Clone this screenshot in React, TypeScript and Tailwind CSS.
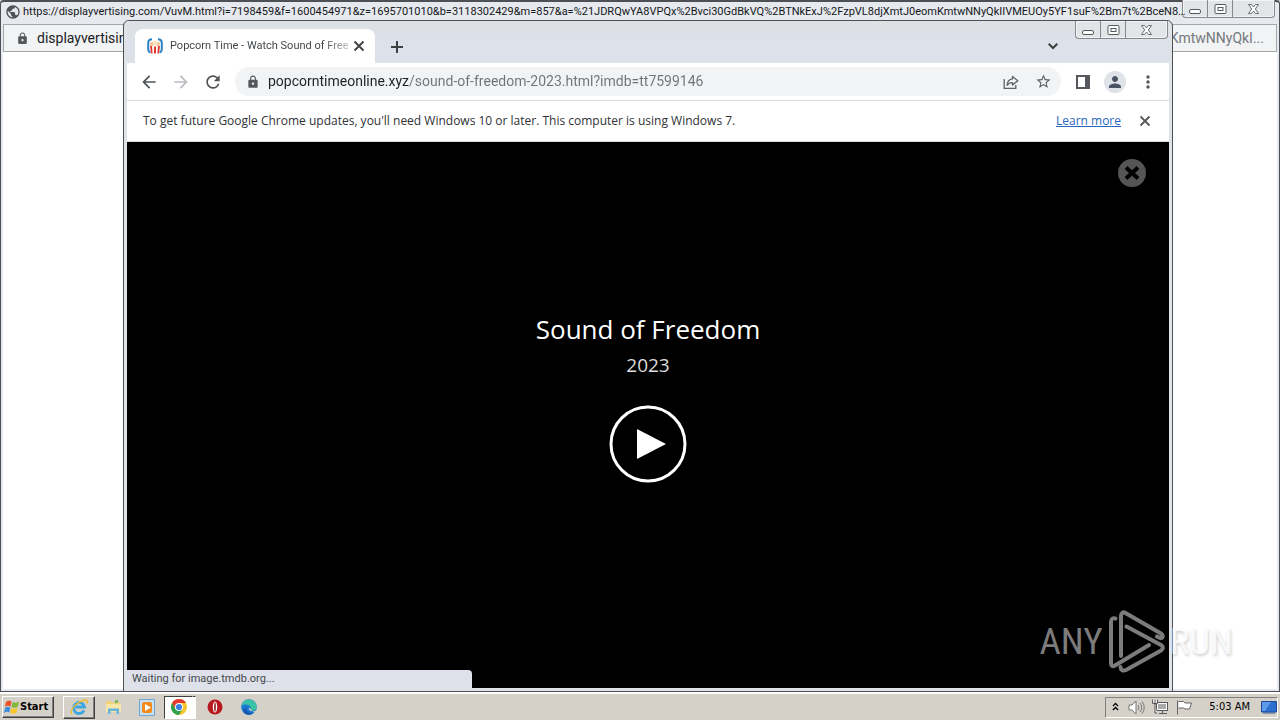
import type { ReactNode } from "react";
import {
  MdArrowBack,
  MdArrowForward,
  MdLock,
  MdMoreVert,
  MdPerson,
  MdPublic,
  MdRefresh,
  MdStarBorder,
} from "react-icons/md";

function CaptionButtons() {
  return (
    <div className="flex h-[18px] shrink-0 rounded-b border border-t-0 border-[#85888c] bg-[#e2e5e8] shadow-[inset_0_0_0_1px_#f2f4f6]">
      <button aria-label="Minimize" className="flex w-[24px] items-center justify-center">
        <svg width="14" height="12" viewBox="0 0 14 12" fill="#fff" stroke="#55585c">
          <rect x="1.5" y="6.5" width="11" height="4" rx="1.5" />
        </svg>
      </button>
      <button aria-label="Maximize" className="flex w-[26px] items-center justify-center border-x border-[#85888c]">
        <svg width="13" height="12" viewBox="0 0 13 12" fill="#fff" stroke="#55585c">
          <rect x="1" y="1.5" width="11" height="9" rx="1" />
          <rect x="4" y="4.5" width="5" height="3" />
        </svg>
      </button>
      <button aria-label="Close" className="flex w-[41px] items-center justify-center">
        <svg width="13" height="12" viewBox="0 0 13 12" fill="#fff" stroke="#6a6d71">
          <path d="M1.5 1.5h3l2 2.5 2-2.5h3L8.3 6l3.2 4.5h-3l-2-2.5-2 2.5h-3L4.7 6z" />
        </svg>
      </button>
    </div>
  );
}

function CrossIcon({ look }: { look: string }) {
  return (
    <svg className={look} viewBox="0 0 12 12" fill="none" stroke="currentColor" strokeWidth="1.8">
      <path d="m1.500 1.500 9 9M10.500 1.500l-9 9" />
    </svg>
  );
}

function BackWindow() {
  return (
    <section
      aria-label="displayvertising.com"
      className="absolute inset-0 flex flex-col rounded-t-sm border border-t-2 border-[#4d5055] bg-[#e6e9ed] px-[2px] pb-[2px]"
    >
      <header className="flex h-[22px] items-start justify-between">
        <div className="z-10 flex h-5 min-w-0 items-center gap-[2px] pl-[2px]">
          <MdPublic className="size-4 shrink-0 text-[#4f5358]" />
          <h2 className="whitespace-nowrap font-['Roboto','Noto_Sans',sans-serif] text-[11px] leading-5 text-[#15181c]">
            https://displayvertising.com/VuvM.html?i=7198459&amp;f=1600454971&amp;z=1695701010&amp;b=3118302429&amp;m=857&amp;a=%21JDRQwYA8VPQx%2Bvci30GdBkVQ%2BTNkExJ%2FzpVL8djXmtJ0eomKmtwNNyQkIIVMEUOy5YF1suF%2Bm7t%2BceN8…
          </h2>
        </div>
        <div className="-mt-[2px] mr-[2px]">
          <CaptionButtons />
        </div>
      </header>
      <div className="flex h-[28px] shrink-0 items-center border border-[#a4a8ad] bg-[#f1f3f4] pl-3 pr-3">
        <MdLock className="mr-2 size-[13px] shrink-0 text-[#55585d]" />
        <span className="flex-1 font-['Roboto','Noto_Sans',sans-serif] text-[14px] text-[#202124]">displayvertising</span>
        <span className="font-['Roboto','Noto_Sans',sans-serif] text-[14px] text-[#75797e]">KmtwNNyQkI...</span>
      </div>
      <div className="flex-1 bg-white" />
    </section>
  );
}

function PopcornIcon() {
  return (
    <svg className="size-4 shrink-0" viewBox="0 0 16 16">
      <path d="M5 1.200C2 1.200 1.200 2.500 1.200 5v6c0 2 .8 3 2.300 3.500M11 1.200c3 0 3.800 1.300 3.800 3.800v6c0 2-.8 3-2.300 3.500" fill="none" stroke="#2b83c6" strokeWidth="2" />
      <circle cx="5" cy="6" r="2.200" fill="#f7c9a0" />
      <circle cx="11" cy="6" r="2.200" fill="#f7c9a0" />
      <circle cx="8" cy="5" r="2.400" fill="#fbe3c4" />
      <path d="M3 8h10l-1 7.500H4z" fill="#fff" />
      <path d="M3 8h2l.6 7.500H4zM7 8.500h2v7H7zM11 8h2l-1 7.500h-1.600z" fill="#e2382d" />
    </svg>
  );
}

function TabStrip() {
  return (
    <div className="flex h-[42px] items-end justify-between bg-linear-to-b from-[#dde1e3] to-[#dde1e9] to-40% pl-2">
      <div className="flex items-end">
        <div className="flex h-[34px] w-[240px] items-center justify-between rounded-t-lg bg-white pl-3 pr-[10px]">
          <div className="flex items-center gap-[7px]">
            <PopcornIcon />
            <span className="whitespace-nowrap bg-linear-to-r from-[#3c4043] from-85% to-[#3c4043]/30 bg-clip-text font-['Roboto','Noto_Sans',sans-serif] text-[11px] text-transparent">
              Popcorn Time - Watch Sound of Free
            </span>
          </div>
          <button aria-label="Close tab" className="text-[#3c4043]">
            <CrossIcon look="size-3" />
          </button>
        </div>
        <button aria-label="New tab" className="mb-[10px] ml-4">
          <svg width="12" height="12" viewBox="0 0 12 12" stroke="#3c4043" strokeWidth="2">
            <path d="M6 0v12M0 6h12" />
          </svg>
        </button>
      </div>
      <div className="mr-px flex h-[42px] items-start">
        <button aria-label="Search tabs" className="mr-[17px] mt-[22px]">
          <svg width="10" height="7" viewBox="0 0 10 7" fill="none" stroke="#3c4043" strokeWidth="2">
            <path d="m.7.700 4.300 4.300L9.300.700" />
          </svg>
        </button>
        <CaptionButtons />
      </div>
    </div>
  );
}

function ShareIcon() {
  return (
    <svg className="size-4" viewBox="0 0 16 16" fill="none" stroke="#5f6368" strokeWidth="1.300">
      <path d="M1.200 5v9.300h11.600V11" />
      <path d="M9.500 2.500 14.800 6.800 9.500 11V8.700C7 8.700 5.300 9.500 4 11.300 4.300 7.800 6 5.200 9.500 4.800z" strokeLinejoin="round" />
    </svg>
  );
}

function Toolbar() {
  return (
    <div className="flex h-[38px] items-center border-b border-[#dadce0] bg-white pl-3 pr-[11px]">
      <div className="flex gap-3">
        <button aria-label="Back"><MdArrowBack className="size-5 text-[#4f5358]" /></button>
        <button aria-label="Forward"><MdArrowForward className="size-5 text-[#b9bcc0]" /></button>
        <button aria-label="Reload"><MdRefresh className="size-5 text-[#4f5358]" /></button>
      </div>
      <div className="ml-3 flex h-[29px] flex-1 items-center rounded-full bg-[#f1f3f5] pl-[11px] pr-[9px]">
        <MdLock className="mr-2 size-[14px] shrink-0 text-[#55585d]" />
        <input
          aria-label="Address and search bar"
          defaultValue="popcorntimeonline.xyz/sound-of-freedom-2023.html?imdb=tt7599146"
          className="min-w-0 flex-1 bg-linear-to-r from-[#202124] from-[141px] to-[#6f7378] to-[141px] bg-clip-text font-['Roboto','Noto_Sans',sans-serif] text-[14px] text-transparent outline-none"
        />
        <div className="flex gap-4">
          <button aria-label="Share this page"><ShareIcon /></button>
          <button aria-label="Bookmark this tab"><MdStarBorder className="size-[17px] text-[#5f6368]" /></button>
        </div>
      </div>
      <button aria-label="Side panel" className="ml-[14px]">
        <svg width="16" height="16" viewBox="0 0 16 16">
          <path d="M1 1h14v14H1zM3 3v10h7V3z" fill="#55585d" fillRule="evenodd" />
        </svg>
      </button>
      <button aria-label="Profile" className="ml-[13px] flex size-[22px] items-center justify-center rounded-full bg-[#dfe2e7]">
        <MdPerson className="size-[18px] text-[#4a5365]" />
      </button>
      <button aria-label="Menu" className="ml-3"><MdMoreVert className="size-5 text-[#55585d]" /></button>
    </div>
  );
}

function InfoBar() {
  return (
    <div className="flex h-[41px] items-center border-b border-[#dadce0] bg-white pl-4 pr-[18px] font-['Open_Sans','Noto_Sans',sans-serif] text-[12px] text-[#303236]">
      <p className="flex-1">To get future Google Chrome updates, you'll need Windows 10 or later. This computer is using Windows 7.</p>
      <a href="#learn-more" className="text-[#2a68bd] underline">Learn more</a>
      <button aria-label="Dismiss" className="ml-[18px] text-[#55585d]"><CrossIcon look="size-3" /></button>
    </div>
  );
}

function Player() {
  return (
    <main className="relative flex flex-1 flex-col items-center bg-black pt-[169px] font-['Open_Sans','Noto_Sans',sans-serif] text-white">
      <h1 className="text-[26px] leading-9">Sound of Freedom</h1>
      <p className="mt-1 text-[19px] leading-7 text-[#dcdcdc]">2023</p>
      <button aria-label="Play" className="mt-[26px]">
        <svg width="78" height="78" viewBox="0 0 78 78">
          <circle cx="39" cy="39" r="37" fill="none" stroke="#fff" strokeWidth="3" />
          <path d="M28 24v30l29-15z" fill="#fff" />
        </svg>
      </button>
      <button aria-label="Close player" className="absolute right-[23px] top-[17px]">
        <svg width="28" height="28" viewBox="0 0 28 28">
          <circle cx="14" cy="14" r="14" fill="#555" />
          <path d="m8 8.500 12 11M20 8.500l-12 11" stroke="#000" strokeWidth="4" />
        </svg>
      </button>
      <div role="status" className="absolute bottom-0 left-0 h-[18px] w-[345px] rounded-tr bg-[#dee1e9] pl-[5px] font-['Roboto','Noto_Sans',sans-serif] text-[11px] leading-[18px] text-[#45484d]">
        Waiting for image.tmdb.org...
      </div>
    </main>
  );
}

function FrontWindow() {
  return (
    <section
      aria-label="Popcorn Time"
      className="absolute bottom-0 left-[123px] right-[107px] top-5 flex flex-col rounded-t-md border border-[#4d5055] bg-[#dfe2e7] px-[3px] pb-[3px]"
    >
      <TabStrip />
      <Toolbar />
      <InfoBar />
      <Player />
    </section>
  );
}

function Watermark() {
  return (
    <div className="pointer-events-none absolute bottom-[19px] right-[47px] z-20 flex items-center gap-[5px] font-['Roboto_Condensed','Liberation_Sans',sans-serif] text-[37px] leading-none">
      <span className="text-[#7c7c7c]">ANY</span>
      <svg width="57" height="64" viewBox="0 0 57 64" fill="none" stroke="#7c7c7c" strokeWidth="4" strokeLinejoin="round" strokeLinecap="round">
        <path d="M7.500 9.500C5 8.500 3 10 3 13v41c0 3 1.500 4 4 2.500L41 36" />
        <path d="M13 47V7c0-3 2-4.500 4.500-3L53 24.500c3 2 1.500 5.500-1 4.500l-3-1.500" />
        <path d="M18.500 17.500 53 36c2.500 1.500 2.500 4 0 5.500L18 61c-3 1.500-5.500 0-5.500-3" />
      </svg>
      <span className="text-white/80 [text-shadow:1px_2px_3px_#00000030]">RUN</span>
    </div>
  );
}

function TaskButton({ label, look, children }: { label: string; look: string; children: ReactNode }) {
  return (
    <button aria-label={label} className={`flex h-[23px] items-center justify-center ${look}`}>
      {children}
    </button>
  );
}

function Taskbar() {
  const raised = "border border-white border-b-[#404040] border-r-[#404040] shadow-[inset_-1px_-1px_0_#808080]";
  return (
    <nav
      aria-label="Taskbar"
      className="flex h-[28px] shrink-0 items-center justify-between border-t-2 border-white bg-[#d5d0c8] pl-[2px] pr-[2px] font-['DejaVu_Sans_Condensed','DejaVu_Sans',sans-serif] text-[11px] text-black"
    >
      <div className="flex items-center">
        <button className={`flex h-[22px] w-[52px] items-center pl-px font-bold ${raised}`}>
          <svg className="size-4 shrink-0" viewBox="0 0 16 16">
            <path d="M2 3c2-1.500 4-1.500 5.500-.5L6.500 7.500C5 6.500 3 6.500 1 8z" fill="#e8522a" />
            <path d="M8.500 3c2 1 4 1 6.500-.5L14 7.500c-2.500 1.500-4.500 1.500-6.500.5z" fill="#83b83a" />
            <path d="M1 9c2-1.500 4-1.500 5.300-.5l-1 5C4 12.500 2 12.500 0 14z" fill="#3b8fdc" />
            <path d="M7.200 9c2 1 4 1 6.500-.5l-1 5c-2.500 1.500-4.500 1.500-6.500.5z" fill="#f7c62d" />
          </svg>
          Start
        </button>
        <div className="ml-[9px] flex items-center">
          <TaskButton label="Internet Explorer" look={`w-8 ${raised}`}>
            <svg width="18" height="18" viewBox="0 0 18 18" fill="none">
              <path d="M14 12.500A5.500 5.500 0 1 1 14.500 9H4" stroke="#3da5e0" strokeWidth="2.800" />
              <path d="M2 16C-1 13 6 4 15 2c3-.5 2.500 2 1.500 3.500" stroke="#efbb2c" strokeWidth="1.400" />
            </svg>
          </TaskButton>
          <TaskButton label="Windows Explorer" look="w-[34px] ml-px">
            <svg width="17" height="16" viewBox="0 0 17 16">
              <path d="M1 2h5l1 1.500h8V13H1z" fill="#efd277" />
              <path d="M1 5h15v8H1z" fill="#f8e7a6" />
              <path d="M3 15V9.500h11V15h-2.500v-3h-6v3z" fill="#65b5dc" />
              <path d="M10 1h3v3h-3z" fill="#79b85b" />
            </svg>
          </TaskButton>
          <TaskButton label="Media Player" look="w-[34px]">
            <svg width="16" height="17" viewBox="0 0 16 17">
              <path d="M.5.500h15v16H.5z" fill="#c6e0f2" stroke="#6fa6d2" />
              <rect x="3" y="3" width="10" height="11" rx="2" fill="#f28a1c" />
              <path d="m6 5 6 3.500-6 3.500z" fill="#fff" />
            </svg>
          </TaskButton>
          <TaskButton label="Google Chrome" look="w-[29px] border border-[#404040] border-b-white border-r-white bg-white">
            <svg width="16" height="16" viewBox="0 0 16 16">
              <circle cx="8" cy="8" r="8" fill="#f9c52b" />
              <path d="M1.070 4A8 8 0 0 1 14.930 4H8L4.500 10z" fill="#e23a2e" />
              <path d="M1.070 4A8 8 0 0 0 8 16l3.500-6-3.500 2L4.500 10z" fill="#2fa14c" />
              <circle cx="8" cy="8" r="4" fill="#fff" />
              <circle cx="8" cy="8" r="3.100" fill="#3c7fe8" />
            </svg>
          </TaskButton>
          <div className="h-[23px] w-[3px] border-r border-t border-r-white border-t-[#404040] bg-white" />
          <TaskButton label="Opera" look="ml-[2px] w-[34px]">
            <svg width="16" height="16" viewBox="0 0 16 16">
              <circle cx="8" cy="8" r="7.500" fill="#b8181c" />
              <ellipse cx="8" cy="8" rx="2.200" ry="5.500" fill="#fff" />
              <ellipse cx="8" cy="8" rx=".8" ry="4.800" fill="#8d1114" />
            </svg>
          </TaskButton>
          <TaskButton label="Microsoft Edge" look="w-[34px]">
            <svg width="16" height="16" viewBox="0 0 16 16">
              <circle cx="8" cy="8" r="7.800" fill="#1a78d0" />
              <path d="M.3 7A7.800 7.800 0 0 1 15.800 8c0 2.500-2 3.600-4 3.600-2.500 0-2.500-1.500-1.700-2.600C9.500 5.500 3.500 4.500.3 7z" fill="#3cc3a6" />
              <path d="M5.500 8c-1 4 2 7 7 5.500-2 2.500-6 3-8.500 1.200S2.500 9 5.500 8z" fill="#1558ae" />
              <path d="M8 8.500c-.8 2 .8 4 4.500 3.800 1.500-.1 2.500-.8 3-1.300l.5 2-1.500 2z" fill="#d5d0c8" />
            </svg>
          </TaskButton>
        </div>
      </div>
      <div className="flex h-[21px] items-center border border-[#808080] border-b-white border-r-white pl-[6px]">
        <button aria-label="Show hidden icons">
          <svg width="7" height="10" viewBox="0 0 8 10" fill="none" stroke="#000" strokeWidth="1.500">
            <path d="m1 4 3-3 3 3M1 8.500l3-3 3 3" />
          </svg>
        </button>
        <button aria-label="Volume" className="ml-[9px]">
          <svg width="17" height="15" viewBox="0 0 17 15" fill="#fff" stroke="#777">
            <path d="M1 5h3l4-4v13l-4-4H1z" />
            <path d="M10 5q2 2.500 0 5M12 3q3.500 4.500 0 9M14 1.500q4.500 6 0 12" fill="none" />
          </svg>
        </button>
        <button aria-label="Network" className="ml-[7px]">
          <svg width="17" height="16" viewBox="0 0 17 16" fill="#fff" stroke="#5a5a5a">
            <rect x="4.500" y="3.500" width="11" height="8" />
            <path d="M6 5h8v5H6z" fill="#aaa" stroke="none" />
            <path d="M7 14.500h8M10.500 12v2M.5.500v4h5v-4M3 .5v4M3 5v9h2" fill="#eee" />
          </svg>
        </button>
        <button aria-label="Action Center" className="ml-[7px]">
          <svg width="17" height="15" viewBox="0 0 17 15" fill="#fff" stroke="#666">
            <path d="M1.500.500v14M2.500 1.500h5l1.500 1.500h6.500l-2 6H9L7.500 8h-5" />
          </svg>
        </button>
        <time className="ml-4 whitespace-nowrap">5:03 AM</time>
        <button aria-label="Show desktop" className="ml-[11px]">
          <svg width="16" height="13" viewBox="0 0 16 13">
            <path d="M.5.500h15v10.500H.5z" fill="#2d6fcf" stroke="#1e4a93" />
            <path d="M1 1h9L4 10H1z" fill="#5b9be8" />
            <path d="M2 12h12" stroke="#3c5e92" />
          </svg>
        </button>
      </div>
    </nav>
  );
}

export default function App() {
  return (
    <div className="flex h-screen flex-col overflow-hidden bg-[#d5d0c8]">
      <div className="relative flex-1">
        <BackWindow />
        <FrontWindow />
        <Watermark />
      </div>
      <Taskbar />
    </div>
  );
}
